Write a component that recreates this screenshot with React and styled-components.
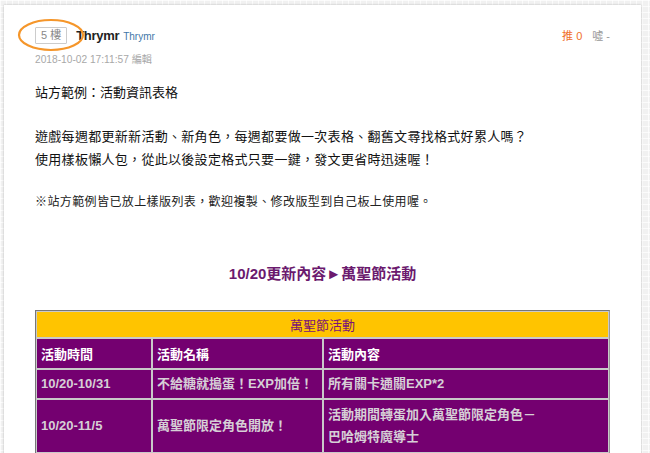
import React from 'react'
import styled, { createGlobalStyle } from 'styled-components'

const GlobalStyle = createGlobalStyle`
  html, body {
    margin: 0;
    padding: 0;
  }
  body {
    width: 650px;
    height: 453px;
    overflow: hidden;
    font-family: "Liberation Sans", "Noto Sans CJK TC", sans-serif;
    background-color: #f1f1f1;
    background-image:
      linear-gradient(rgba(255,255,255,0.7) 1px, transparent 1px),
      linear-gradient(90deg, rgba(255,255,255,0.7) 1px, transparent 1px);
    background-size: 6px 6px;
  }
`

const rows = [
  { time: '10/20-10/31', name: '不給糖就搗蛋！EXP加倍！', content: ['所有關卡通關EXP*2'] },
  { time: '10/20-11/5', name: '萬聖節限定角色開放！', content: ['活動期間轉蛋加入萬聖節限定角色－', '巴哈姆特魔導士'] },
]

const App = () => {
  return (
    <>
      <GlobalStyle />
      <Page>
        <Card>
          <PostHeader>
            <Author>
              <FloorWrap>
                <Floor>5 樓</Floor>
                <Circle viewBox="0 0 68 34">
                  <ellipse cx="34" cy="17" rx="32" ry="15" fill="none" stroke="#f5962a" strokeWidth="2.2" />
                </Circle>
              </FloorWrap>
              <Nick>Thrymr</Nick>
              <UserId>Thrymr</UserId>
            </Author>
            <Votes>
              <Push>推 0</Push>
              <Boo>噓 -</Boo>
            </Votes>
          </PostHeader>
          <DateLine>2018-10-02 17:11:57 編輯</DateLine>

          <Body>
            <Title>站方範例：活動資訊表格</Title>
            <Para>
              遊戲每週都更新新活動、新角色，每週都要做一次表格、翻舊文尋找格式好累人嗎？
              <br />
              使用樣板懶人包，從此以後設定格式只要一鍵，發文更省時迅速喔！
            </Para>
            <Note>※站方範例皆已放上樣版列表，歡迎複製、修改版型到自己板上使用喔。</Note>

            <Heading>10/20更新內容►萬聖節活動</Heading>

            <EventTable>
              <colgroup>
                <col width="116" />
                <col width="171" />
                <col />
              </colgroup>
              <tbody>
                <tr>
                  <TitleCell colSpan={3}>萬聖節活動</TitleCell>
                </tr>
                <tr>
                  <HeadCell>活動時間</HeadCell>
                  <HeadCell>活動名稱</HeadCell>
                  <HeadCell>活動內容</HeadCell>
                </tr>
                {rows.map((r) => (
                  <tr key={r.time}>
                    <DataCell>{r.time}</DataCell>
                    <DataCell>{r.name}</DataCell>
                    <DataCell>
                      {r.content.map((c, i) => (
                        <div key={i}>{c}</div>
                      ))}
                    </DataCell>
                  </tr>
                ))}
              </tbody>
            </EventTable>
          </Body>
        </Card>
      </Page>
    </>
  )
}

export default App

const Page = styled.div`
  padding: 5px 9px 0 4px;
  height: 448px;
  overflow: hidden;
`

const Card = styled.div`
  background: #fff;
  box-shadow: 0 0 2px rgba(0, 0, 0, 0.25);
  padding: 22px 31px 0 31px;
  min-height: 500px;
`

const PostHeader = styled.div`
  display: flex;
  align-items: center;
  justify-content: space-between;
`

const Author = styled.div`
  display: flex;
  align-items: center;
`

const FloorWrap = styled.div`
  position: relative;
`

const Floor = styled.div`
  border: 1px solid #ccc;
  color: #888;
  font-size: 11px;
  line-height: 15px;
  padding: 0 5px;
  border-radius: 1px;
`

const Circle = styled.svg`
  position: absolute;
  left: -18px;
  top: -9px;
  width: 68px;
  height: 34px;
`

const Nick = styled.span`
  font-weight: 700;
  font-size: 13px;
  letter-spacing: -0.3px;
  color: #222;
  margin-left: 9px;
`

const UserId = styled.span`
  font-size: 10px;
  color: #3f77a8;
  margin-left: 4px;
  margin-top: 2px;
`

const Votes = styled.div`
  display: flex;
  gap: 10px;
  font-size: 11px;
  margin-right: 0;
  margin-top: -2px;
`

const Push = styled.span`
  color: #f0702a;
`

const Boo = styled.span`
  color: #999;
`

const DateLine = styled.div`
  font-size: 10.2px;
  color: #a8a8a8;
  margin-top: 7px;
`

const Body = styled.div`
  margin-top: 15px;
  font-size: 13px;
  color: #111;
`

const Title = styled.p`
  margin: 0 0 21px;
  line-height: 23px;
`

const Para = styled.p`
  margin: 0 0 21px;
  line-height: 23px;
  letter-spacing: 0.3px;
`

const Note = styled.p`
  margin: 0;
  font-size: 12px;
  line-height: 20px;
  letter-spacing: 0.4px;
  color: #222;
`

const Heading = styled.div`
  margin-top: 50px;
  text-align: center;
  font-size: 15px;
  font-weight: 700;
  color: #6b1a6e;
`

const EventTable = styled.table`
  margin-top: 27px;
  width: 575px;
  table-layout: fixed;
  border-collapse: separate;
  border-spacing: 0;
  border: 1px solid #777;
  border-right-color: #999;
  border-bottom-color: #999;
  font-size: 13px;
  font-weight: 700;
`

const Cell = styled.td`
  border: 1px solid #c9c9c9;
  padding: 0 4px;
  text-align: left;
  vertical-align: middle;
`

const TitleCell = styled(Cell)`
  background: #ffc400;
  color: #7a1478;
  font-weight: 400;
  font-size: 13px;
  text-align: center;
  height: 25px;
`

const HeadCell = styled(Cell)`
  background: #740070;
  color: #fff;
  height: 29px;
`

const DataCell = styled(Cell)`
  background: #740070;
  color: #d6cfd6;
  height: 28px;
  line-height: 22px;

  tr:last-child > & {
    height: 52px;
  }
`
